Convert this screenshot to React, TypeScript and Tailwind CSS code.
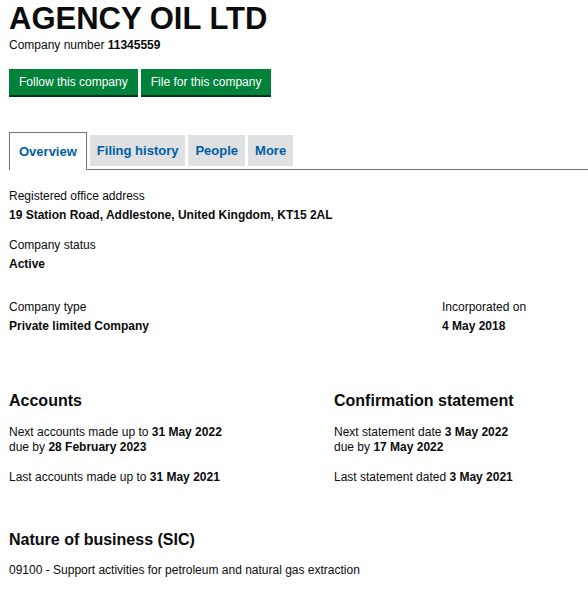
const body = "font-['Liberation_Sans',Arial,sans-serif]";

function Field({ label, value }: { label: string; value: string }) {
  return (
    <div>
      <div className="text-[12px] leading-[15px]">{label}</div>
      <div className="mt-[4px] text-[12px] leading-[15px] font-bold">{value}</div>
    </div>
  );
}

const tabs = ["Filing history", "People", "More"];

export default function App() {
  return (
    <div className={`${body} bg-white text-[#0b0c0c] w-[588px] h-[600px] overflow-hidden px-[9px] pt-[2px]`}>
      <h1 className="text-[31px] leading-[34px] font-bold">AGENCY OIL LTD</h1>
      <p className="mt-[2px] text-[12px] leading-[15px]">
        Company number <strong>11345559</strong>
      </p>

      <div className="mt-[16px] flex gap-[3px]">
        <button className="h-[26px] px-[10px] bg-[#00823b] text-white text-[12px] shadow-[0_2px_0_#003618]">
          Follow this company
        </button>
        <button className="h-[26px] px-[10px] bg-[#00823b] text-white text-[12px] shadow-[0_2px_0_#003618]">
          File for this company
        </button>
      </div>

      <div className="mt-[37px] -mr-[9px] flex items-end border-b border-[#6f777b] text-[13px] font-bold text-[#005ea5]">
        <div className="h-[38px] -mb-px px-[9px] flex items-center bg-white border border-b-0 border-[#6f777b]">
          Overview
        </div>
        {tabs.map((t) => (
          <div key={t} className="ml-[3px] mb-[3px] h-[31px] px-[7px] flex items-center bg-[#dee0e2]">
            {t}
          </div>
        ))}
      </div>

      <div className="mt-[19px] flex flex-col gap-[15px]">
        <Field label="Registered office address" value="19 Station Road, Addlestone, United Kingdom, KT15 2AL" />
        <Field label="Company status" value="Active" />
      </div>

      <div className="mt-[28px] flex">
        <div className="w-[433px]">
          <Field label="Company type" value="Private limited Company" />
        </div>
        <Field label="Incorporated on" value="4 May 2018" />
      </div>

      <div className="mt-[57px] flex">
        <div className="w-[325px]">
          <h2 className="text-[16px] leading-[20px] font-bold">Accounts</h2>
          <p className="mt-[14px] text-[12px] leading-[15px]">
            Next accounts made up to <strong>31 May 2022</strong>
            <br />
            due by <strong>28 February 2023</strong>
          </p>
          <p className="mt-[15px] text-[12px] leading-[15px]">
            Last accounts made up to <strong>31 May 2021</strong>
          </p>
        </div>
        <div>
          <h2 className="text-[16px] leading-[20px] font-bold">Confirmation statement</h2>
          <p className="mt-[14px] text-[12px] leading-[15px]">
            Next statement date <strong>3 May 2022</strong>
            <br />
            due by <strong>17 May 2022</strong>
          </p>
          <p className="mt-[15px] text-[12px] leading-[15px]">
            Last statement dated <strong>3 May 2021</strong>
          </p>
        </div>
      </div>

      <h2 className="mt-[45px] text-[16px] leading-[20px] font-bold">Nature of business (SIC)</h2>
      <p className="mt-[13px] text-[12px] leading-[15px]">
        09100 - Support activities for petroleum and natural gas extraction
      </p>
    </div>
  );
}
